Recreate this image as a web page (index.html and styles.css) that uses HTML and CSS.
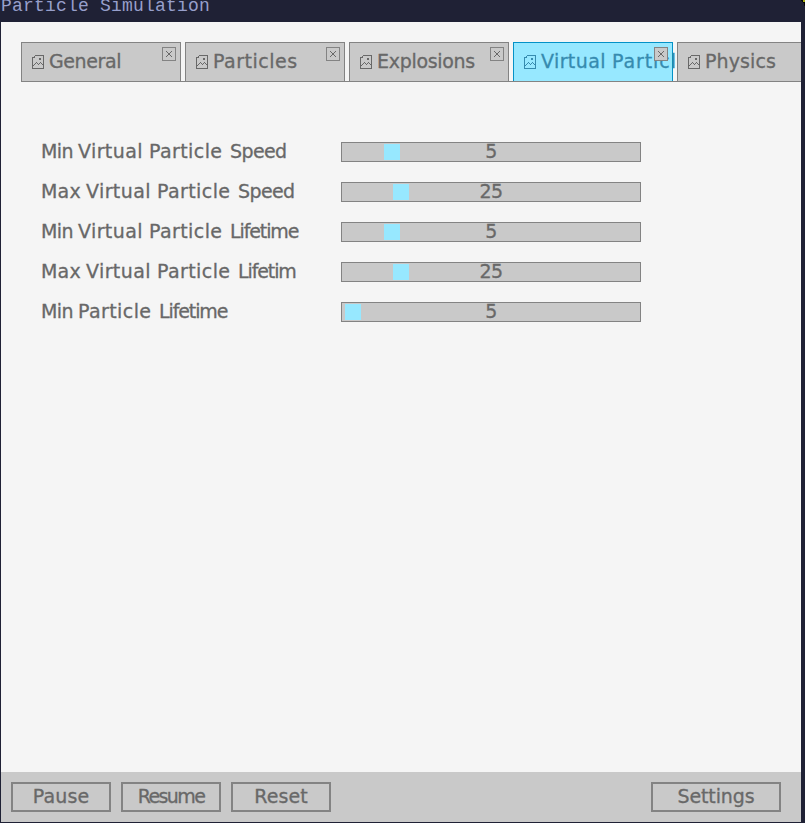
FILE: index.html
```html
<!DOCTYPE html>
<html lang="en">
<head>
<meta charset="utf-8">
<title>Particle Simulation</title>
<link rel="stylesheet" href="styles.css">
</head>
<body>
<svg class="defs" width="0" height="0">
  <symbol id="picture" viewBox="0 0 12 14"><path d="M2.5 .5H11.5V13.5H.5V2.5H2.5V.5M7 4H9M7 3.5H9M1 10.5H2M2 9.5H3M3 8.5H4M4 7.5H5M5 8.5H6M6 9.5H7M7 8.5H8M8 7.5H9M9 8.5H10M10 9.5H11"/></symbol>
  <symbol id="cross" viewBox="0 0 14 14"><path d="M4 4.5H5M9 4.5H10M5 5.5H6M8 5.5H9M6 6.5H8M6 7.5H8M5 8.5H6M8 8.5H9M4 9.5H5M9 9.5H10"/></symbol>
</svg>
<div class="window">
  <header class="titlebar">Particle Simulation<i class="corner"></i></header>
  <main class="content">
    <nav class="tabs">
      <div class="tab"><svg class="icon"><use href="#picture"/></svg><span class="name general">General</span><button class="close"><svg><use href="#cross"/></svg></button></div>
      <div class="tab"><svg class="icon"><use href="#picture"/></svg><span class="name particles">Particles</span><button class="close"><svg><use href="#cross"/></svg></button></div>
      <div class="tab"><svg class="icon"><use href="#picture"/></svg><span class="name explosions">Explosions</span><button class="close"><svg><use href="#cross"/></svg></button></div>
      <div class="tab active"><svg class="icon"><use href="#picture"/></svg><span class="name words"><span class="virtual">Virtual</span> <span class="particle">Particl</span></span><button class="close"><svg><use href="#cross"/></svg></button></div>
      <div class="tab"><svg class="icon"><use href="#picture"/></svg><span class="name physics">Physics</span></div>
    </nav>
    <section class="settings">
      <div class="row"><label class="words"><span class="min">Min</span> <span class="virtual">Virtual</span> <span class="particle">Particle</span> <span>Speed</span></label><div class="slider"><i class="thumb" style="left:42px"></i>5</div></div>
      <div class="row"><label class="words"><span class="max">Max</span> <span class="virtual">Virtual</span> <span class="particle">Particle</span> <span>Speed</span></label><div class="slider"><i class="thumb" style="left:51px"></i>25</div></div>
      <div class="row"><label class="words"><span class="min">Min</span> <span class="virtual">Virtual</span> <span class="particle">Particle</span> <span class="life">Lifetime</span></label><div class="slider"><i class="thumb" style="left:42px"></i>5</div></div>
      <div class="row"><label class="words"><span class="max">Max</span> <span class="virtual">Virtual</span> <span class="particle">Particle</span> <span class="life">Lifetim</span></label><div class="slider"><i class="thumb" style="left:51px"></i>25</div></div>
      <div class="row"><label class="words"><span class="min">Min</span> <span class="particle">Particle</span> <span class="life">Lifetime</span></label><div class="slider"><i class="thumb" style="left:3px"></i>5</div></div>
    </section>
  </main>
  <footer class="toolbar">
    <button class="btn pause">Pause</button>
    <button class="btn resume">Resume</button>
    <button class="btn reset">Reset</button>
    <button class="btn wide">Settings</button>
  </footer>
</div>
</body>
</html>
```
FILE: styles.css
```css
* { box-sizing: border-box; }
body { margin: 0; background: #1f2135; overflow: hidden; }
button { font: inherit; letter-spacing: inherit; color: inherit; padding: 0; }
.defs { position: absolute; }
.window {
  width: 805px; height: 823px; padding: 0 4px 1px 1px;
  display: flex; flex-direction: column;
  font: 19px/20px "DejaVu Sans", sans-serif; letter-spacing: -0.6px;
  color: #686868; white-space: nowrap;
  -webkit-text-stroke: 0.3px;
}
.titlebar {
  position: relative; height: 22px; margin: 0 -4px 0 -1px; padding-left: 1px;
  background: #1f2135; color: #979fcb;
  font: 18px/13px "Liberation Mono", monospace; letter-spacing: 0.2px;
  -webkit-text-stroke: 0;
}
.corner {
  position: absolute; right: 0; top: 0; width: 6px; height: 9px;
  background: radial-gradient(ellipse 6px 9px at 0 100%, #1f2135 98%, #050505 100%);
}
.corner::after {
  content: ""; position: absolute; right: 0; top: 0;
  width: 2px; height: 2px; background: #a9ae16;
}
.content { flex: 1; background: #f5f5f5; padding-top: 20px; overflow: hidden; }
.tabs {
  display: flex; gap: 4px; height: 40px; margin-left: 20px;
  background: linear-gradient(#838383, #838383) 0 39px / 100% 1px no-repeat;
}
.tab {
  position: relative; flex: 0 0 160px; min-width: 0; height: 39px; padding: 0 0 0 10px;
  display: flex; align-items: flex-start;
  border: 1px solid #838383; border-bottom: 0; background: #c9c9c9;
}
.tab.active { background: #97e8ff; border-color: #0492c7; color: #368baf; }
.icon { width: 12px; height: 14px; margin: 12px 5px 0 0; flex: none; }
svg { display: block; fill: none; stroke: currentColor; stroke-width: 1; shape-rendering: crispEdges; }
.name { margin-top: 8px; flex: none; }
.general { letter-spacing: -0.4px; }
.particles { letter-spacing: 0.5px; }
.explosions { letter-spacing: -0.3px; }
.physics { letter-spacing: 0.1px; }
.close {
  position: absolute; top: 4px; right: 4px; width: 14px; height: 14px;
  border: 1px solid #838383; background: #c9c9c9; color: #686868;
}
.close svg { width: 14px; height: 14px; margin: -1px; }
.settings { display: grid; gap: 20px; margin: 60px 0 0 40px; }
.row { display: grid; grid-template-columns: 300px 300px; height: 20px; }
.row label { line-height: 19px; }
.words { display: flex; }
.words span { flex: none; }
.words .min { width: 37px; }
.words .max { width: 45px; letter-spacing: 0.2px; }
.words .virtual { width: 71px; letter-spacing: 0.4px; }
.words .particle { width: 81px; letter-spacing: 0.4px; }
.tab .words .particle { width: auto; letter-spacing: 0.9px; }
.words .life { letter-spacing: -1.1px; }
.slider {
  position: relative; height: 20px; border: 1px solid #838383; background: #c9c9c9;
  line-height: 17px; text-align: center;
}
.thumb { position: absolute; top: 1px; width: 16px; height: 16px; background: #97e8ff; }
.toolbar { display: flex; gap: 10px; height: 50px; padding: 10px 20px 10px 10px; background: #c9c9c9; }
.btn { width: 100px; height: 30px; border: 2px solid #838383; background: #c9c9c9; line-height: 24px; padding-bottom: 2px; }
.pause, .reset { letter-spacing: 0.1px; }
.resume { letter-spacing: -1.6px; }
.wide { width: 130px; margin-left: auto; letter-spacing: -0.1px; }
```
